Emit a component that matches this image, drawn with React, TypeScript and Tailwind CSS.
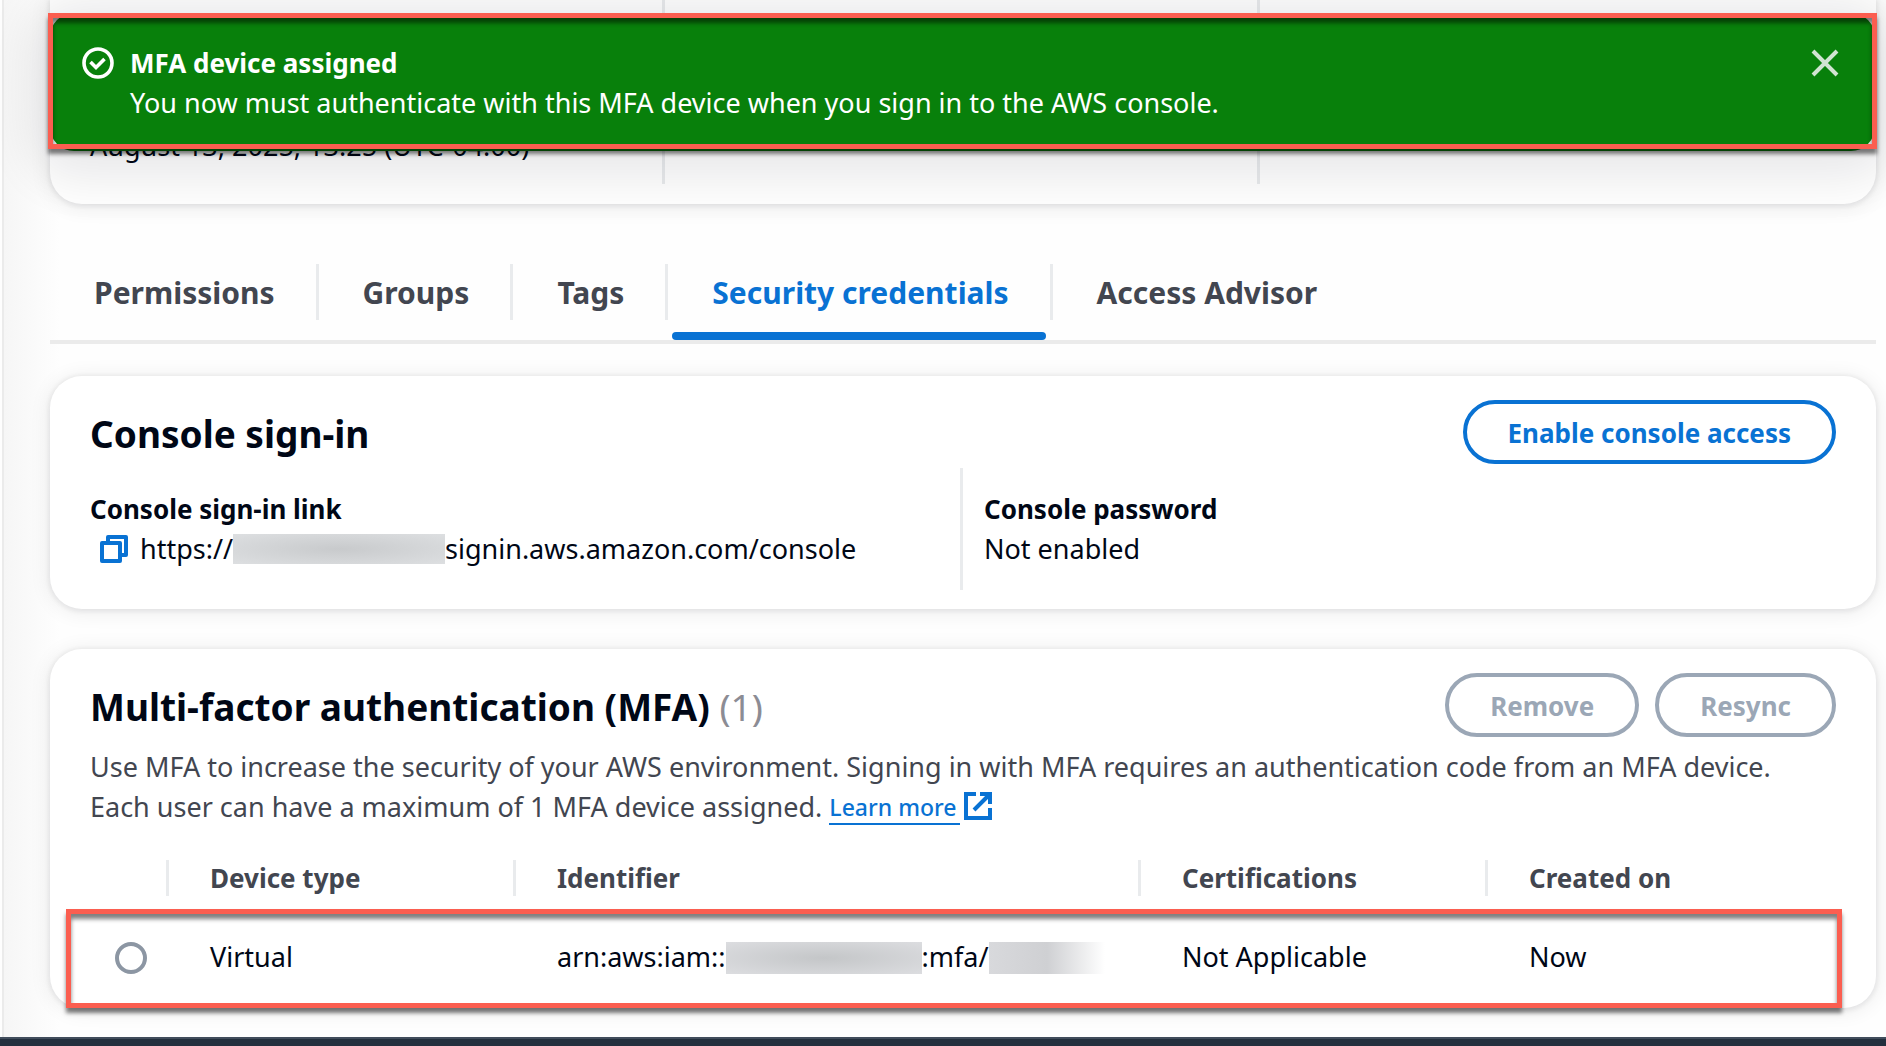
import { FC, ReactNode, useState } from "react";

const tabs = ["Permissions", "Groups", "Tags", "Security credentials", "Access Advisor"];

interface PillButtonProps {
    children: ReactNode;
    disabled?: boolean;
}

const PillButton: FC<PillButtonProps> = ({ children, disabled }) => (
    <button
        type="button"
        disabled={disabled}
        className="h-16 shrink-0 rounded-full border-4 border-[#0972d3] px-[41px] pt-0.5 text-[26px] leading-10 font-bold text-[#0972d3] disabled:border-[#9ba7b6] disabled:text-[#9ba7b6]"
    >
        {children}
    </button>
);

const Card: FC<{ children: ReactNode; className?: string }> = ({ children, className = "" }) => (
    <section className={`bg-white shadow-[0_1px_4px_2px_rgba(0,7,22,0.06),0_2px_20px_2px_rgba(0,7,22,0.07)] ${className}`}>
        {children}
    </section>
);

const Callout: FC<{ className: string }> = ({ className }) => (
    <div
        aria-hidden="true"
        className={`pointer-events-none absolute border-[5px] border-[#fb5e50] shadow-[0_5px_4px_rgba(0,0,0,0.5),inset_0_5px_4px_rgba(0,0,0,0.5)] ${className}`}
    />
);

const Flash: FC<{ onClose: () => void }> = ({ onClose }) => (
    <div className="absolute top-[13px] right-[9px] left-11 z-10">
        <div
            role="status"
            className="mx-[2px] flex h-[138px] items-start rounded-3xl bg-[#08800b] pt-[30px] pr-[30px] pl-8 text-white shadow-[0_8px_48px_20px_rgba(0,7,22,0.09)]"
        >
            <svg viewBox="0 0 32 32" className="mt-1 size-8 shrink-0" fill="none" stroke="currentColor" strokeWidth="3.6">
                <circle cx="16" cy="16" r="14" />
                <path d="M8.5 15l5.5 5.5 8.5-8.5" />
            </svg>
            <div className="ml-4 flex-1">
                <p className="text-[26px] leading-10 font-bold">MFA device assigned</p>
                <p className="text-[27px] leading-10">You now must authenticate with this MFA device when you sign in to the AWS console.</p>
            </div>
            <button type="button" aria-label="Dismiss" onClick={onClose} className="p-1 text-[#d1e4d2]">
                <svg viewBox="0 0 32 32" className="size-8" fill="none" stroke="currentColor" strokeWidth="4">
                    <path d="M4 4l24 24M28 4L4 28" />
                </svg>
            </button>
        </div>
        <Callout className="inset-x-0 top-0 h-[136px]" />
    </div>
);

const CopyIcon = () => (
    <svg viewBox="0 0 28 28" className="size-7" fill="none" stroke="currentColor" strokeWidth="4" strokeLinejoin="round">
        <path d="M2 8h18v18H2z" />
        <path d="M8 8V2h18v18h-6" />
    </svg>
);

const ExternalIcon = () => (
    <svg viewBox="0 0 28 28" className="size-7" fill="none" stroke="currentColor" strokeWidth="4">
        <path d="M12 2H2v24h24V16" />
        <path d="M16 2h10v10M26 2L10 18" />
    </svg>
);

const HeaderCell: FC<{ children: ReactNode; className?: string }> = ({ children, className = "" }) => (
    <th className={`text-[26px] font-bold ${className}`}>
        <div className="border-l-[3px] border-[#e9ebed] pl-[41px] leading-9">{children}</div>
    </th>
);

export default function App() {
    const [active, setActive] = useState("Security credentials");
    const [showFlash, setShowFlash] = useState(true);

    return (
        <div className="overflow-hidden bg-[#fefefe] font-['Noto_Sans','Open_Sans',sans-serif] text-[#000716]">
            <div className="relative ml-[2px] border-l-2 border-[#ebebeb] bg-linear-to-r from-[#f6f6f6] to-[#fefefe] to-[56px] pr-[10px] pb-[29px] pl-[46px]">
                {showFlash && <Flash onClose={() => setShowFlash(false)} />}

                <Card className="flex h-[204px] rounded-b-[32px] px-10 pb-5 text-[27px] leading-10">
                    <div className="w-[575px] border-r-[3px] border-[#e9ebed] pt-[126px]">August 13, 2025, 13:25 (UTC-04:00)</div>
                    <div className="w-[595px] border-r-[3px] border-[#e9ebed]" />
                </Card>

                <nav className="mt-15 flex border-b-4 border-[#ebebeb]">
                    {tabs.map((tab, i) => (
                        <div key={tab} className="flex">
                            {i > 0 && <span className="h-14 w-[3px] bg-[#e9ebed]" />}
                            <button
                                type="button"
                                onClick={() => setActive(tab)}
                                className={`relative h-[76px] pr-[41px] pb-[18px] pl-11 text-[30px] leading-10 font-bold ${tab === active ? "text-[#0972d3]" : "text-[#424650]"}`}
                            >
                                {tab}
                                {tab === active && <span className="absolute inset-x-1 bottom-0 h-2 rounded bg-[#0972d3]" />}
                            </button>
                        </div>
                    ))}
                </nav>

                <Card className="mt-8 rounded-[32px] pt-6 pb-[19px]">
                    <div className="flex justify-between px-10">
                        <h2 className="pt-1 text-[37px] leading-[60px] font-bold">Console sign-in</h2>
                        <PillButton>Enable console access</PillButton>
                    </div>
                    <dl className="mt-1 grid grid-cols-2 pr-[46px] pl-10">
                        <div className="py-[21px]">
                            <dt className="text-[26px] leading-10 font-bold">Console sign-in link</dt>
                            <dd className="flex items-center text-[27px] leading-10">
                                <button type="button" aria-label="Copy sign-in link" className="mr-3 ml-[10px] text-[#0972d3]">
                                    <CopyIcon />
                                </button>
                                https://
                                <span className="h-[30px] w-[212px] bg-[radial-gradient(#c8cacc,#dddfe1)]" />
                                signin.aws.amazon.com/console
                            </dd>
                        </div>
                        <div className="border-l-[3px] border-[#e9ebed] py-[21px] pl-[21px]">
                            <dt className="text-[26px] leading-10 font-bold">Console password</dt>
                            <dd className="text-[27px] leading-10">Not enabled</dd>
                        </div>
                    </dl>
                </Card>

                <Card className="relative mt-10 rounded-[32px] pt-6 pb-2">
                    <div className="flex justify-between px-10">
                        <h2 className="pt-1 text-[37px] leading-[60px] font-bold">
                            Multi-factor authentication (MFA) <span className="font-normal text-[#8c8c94]">(1)</span>
                        </h2>
                        <div className="flex gap-4">
                            <PillButton disabled>Remove</PillButton>
                            <PillButton disabled>Resync</PillButton>
                        </div>
                    </div>
                    <p className="mt-[10px] px-10 text-[27px] leading-10 text-[#424650]">
                        Use MFA to increase the security of your AWS environment. Signing in with MFA requires an authentication code from an MFA device.
                        <br />
                        Each user can have a maximum of 1 MFA device assigned.{" "}
                        <a href="#learn-more" className="inline-flex items-center gap-1 align-top text-[#0972d3]">
                            <span className="h-[38px] border-b-2 pr-1 text-[23px] leading-10 font-medium">Learn more</span>
                            <ExternalIcon />
                        </a>
                    </p>
                    <table className="mt-[14px] w-full table-fixed text-left text-[27px]">
                        <thead className="text-[#424650]">
                            <tr className="h-[74px]">
                                <th className="w-[116px]" aria-label="Selection" />
                                <HeaderCell className="w-[347px]">Device type</HeaderCell>
                                <HeaderCell className="w-[625px]">Identifier</HeaderCell>
                                <HeaderCell className="w-[347px]">Certifications</HeaderCell>
                                <HeaderCell>Created on</HeaderCell>
                            </tr>
                        </thead>
                        <tbody>
                            <tr className="h-[85px]">
                                <td className="pl-[65px]">
                                    <input
                                        type="radio"
                                        name="device"
                                        aria-label="Select virtual device"
                                        className="block size-8 appearance-none rounded-full border-4 border-[#8c96a3] checked:border-[10px] checked:border-[#0972d3]"
                                    />
                                </td>
                                <td className="pl-11">Virtual</td>
                                <td className="pl-11">
                                    <div className="flex items-center">
                                        arn:aws:iam::
                                        <span className="h-8 w-[196px] bg-[radial-gradient(#c4c6c8,#dcdde0)]" />
                                        :mfa/
                                        <span className="h-8 w-[116px] bg-linear-to-r from-[#d8d9dc] via-[#cfd0d3] to-white" />
                                    </div>
                                </td>
                                <td className="pl-11">Not Applicable</td>
                                <td className="pl-11">Now</td>
                            </tr>
                        </tbody>
                    </table>
                    <Callout className="right-[34px] bottom-0 left-4 h-[99px]" />
                </Card>
            </div>
            <footer className="h-[10px] border-t-2 border-[#414d5c] bg-[#232f3e]" />
        </div>
    );
}
